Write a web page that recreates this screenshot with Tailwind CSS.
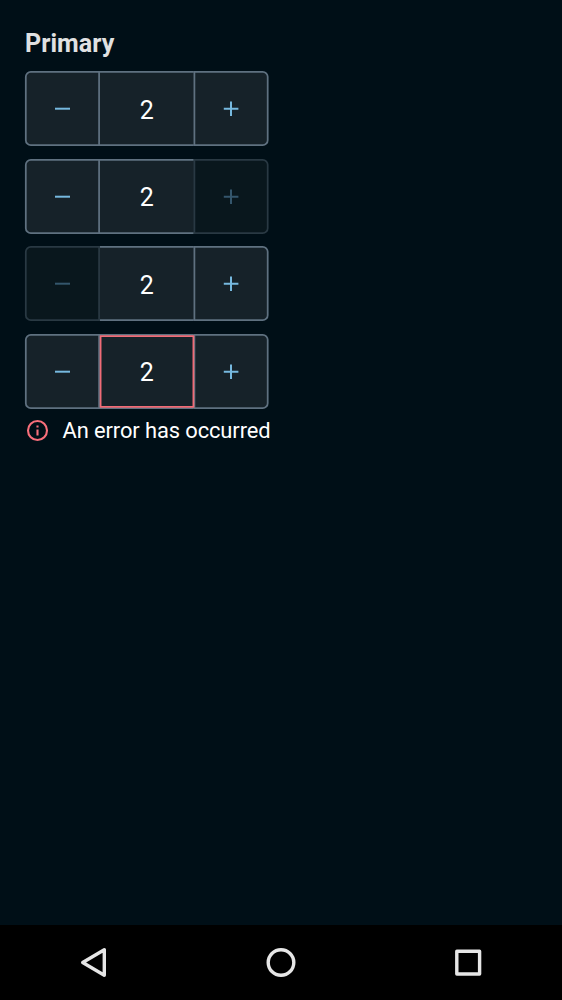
<!DOCTYPE html>
<html lang="en">
<head>
<meta charset="utf-8">
<meta name="viewport" content="width=device-width, initial-scale=1">
<title>Primary</title>
<script src="https://cdn.jsdelivr.net/npm/@tailwindcss/browser@4"></script>
</head>
<body class="bg-[#000f17]">
<div class="flex h-[1000px] w-[562px] flex-col overflow-hidden bg-[#000f17] font-[Roboto,sans-serif]">
  <svg class="hidden">
    <defs>
      <path id="left" d="M74.1 .8H5.8a5 5 0 0 0-5 5V69.2a5 5 0 0 0 5 5H74.1Z"/>
      <path id="right" d="M169.4 .8H237.7a5 5 0 0 1 5 5V69.2a5 5 0 0 1-5 5H169.4Z"/>
      <path id="mid" d="M75 .8H168.8M75 74.2H168.8"/>
      <path id="minus" d="M30 37.7H45"/>
      <path id="plus" d="M198.8 37.7H213.4M206 30.4V45"/>
    </defs>
  </svg>
  <main class="flex grow flex-col pl-[25px] pt-[29px]">
    <h1 class="h-[42.3px] text-[25px] font-bold leading-[30px] tracking-[0.08px] text-[#e0e1e2]">Primary</h1>
    <div class="flex flex-col gap-[12.5px]">
      <div class="relative grid h-[75px] w-[243.5px] place-items-center pt-[4px]">
        <svg class="absolute inset-0 h-full w-full overflow-visible" viewBox="0 0 243.5 75" fill="none" stroke-width="1.75">
          <path d="M75 .8H169V74.2H75Z" fill="#162229"/>
          <use href="#mid" stroke="#5f7180"/>
          <use href="#left" fill="#162229" stroke="#5f7180"/><use href="#right" fill="#162229" stroke="#5f7180"/>
          <use href="#minus" stroke="#76b9df" stroke-width="2"/><use href="#plus" stroke="#76b9df" stroke-width="2"/>
        </svg>
        <span class="relative text-[25px] leading-[30px] text-white">2</span>
      </div>
      <div class="relative grid h-[75px] w-[243.5px] place-items-center pt-[4px]">
        <svg class="absolute inset-0 h-full w-full overflow-visible" viewBox="0 0 243.5 75" fill="none" stroke-width="1.75">
          <path d="M75 .8H169V74.2H75Z" fill="#162229"/>
          <use href="#mid" stroke="#5f7180"/>
          <use href="#left" fill="#162229" stroke="#5f7180"/><use href="#right" fill="#09171d" stroke="#293943"/>
          <use href="#minus" stroke="#76b9df" stroke-width="2"/><use href="#plus" stroke="#34566c" stroke-width="2"/>
        </svg>
        <span class="relative text-[25px] leading-[30px] text-white">2</span>
      </div>
      <div class="relative grid h-[75px] w-[243.5px] place-items-center pt-[4px]">
        <svg class="absolute inset-0 h-full w-full overflow-visible" viewBox="0 0 243.5 75" fill="none" stroke-width="1.75">
          <path d="M75 .8H169V74.2H75Z" fill="#162229"/>
          <use href="#mid" stroke="#5f7180"/>
          <use href="#left" fill="#09171d" stroke="#293943"/><use href="#right" fill="#162229" stroke="#5f7180"/>
          <use href="#minus" stroke="#34566c" stroke-width="2"/><use href="#plus" stroke="#76b9df" stroke-width="2"/>
        </svg>
        <span class="relative text-[25px] leading-[30px] text-white">2</span>
      </div>
      <div class="relative grid h-[75px] w-[243.5px] place-items-center pt-[4px]">
        <svg class="absolute inset-0 h-full w-full overflow-visible" viewBox="0 0 243.5 75" fill="none" stroke-width="1.75">
          <path d="M75 .8H169V74.2H75Z" fill="#162229"/>
          <use href="#mid" stroke="#5f7180"/>
          <use href="#left" fill="#162229" stroke="#5f7180"/><use href="#right" fill="#162229" stroke="#5f7180"/>
          <path d="M75.6 2.2H168.4V72.8H75.6Z" stroke="#f06c77"/>
          <use href="#minus" stroke="#76b9df" stroke-width="2"/><use href="#plus" stroke="#76b9df" stroke-width="2"/>
        </svg>
        <span class="relative text-[25px] leading-[30px] text-white">2</span>
      </div>
    </div>
    <div class="mt-[9.2px] flex h-[26px] items-center">
      <svg class="-mt-px h-[25px] w-[25px]" viewBox="0 0 25 25" fill="none" stroke="#f86f7b" stroke-width="2.1">
        <circle cx="12.5" cy="12.5" r="9.5"/>
        <path d="M12.5 11.5V17.5M12.5 7.4V9.5"/>
      </svg>
      <p class="ml-[12.5px] mt-px whitespace-nowrap text-[21.9px] leading-[26px] tracking-[-0.1px] text-white">An error has occurred</p>
    </div>
  </main>
  <nav class="flex h-[75px] bg-black">
    <svg class="h-[75px] w-[562px]" viewBox="0 0 562 75" fill="none" stroke="#e6e6e6" stroke-width="3.4">
      <path d="M104.3 24.7V50.3L82.7 37.5Z" stroke-linejoin="round"/>
      <circle cx="281" cy="37.5" r="12.8"/>
      <rect x="456.8" y="26.2" width="22.8" height="22.8" stroke-linejoin="round"/>
    </svg>
  </nav>
</div>
</body>
</html>
